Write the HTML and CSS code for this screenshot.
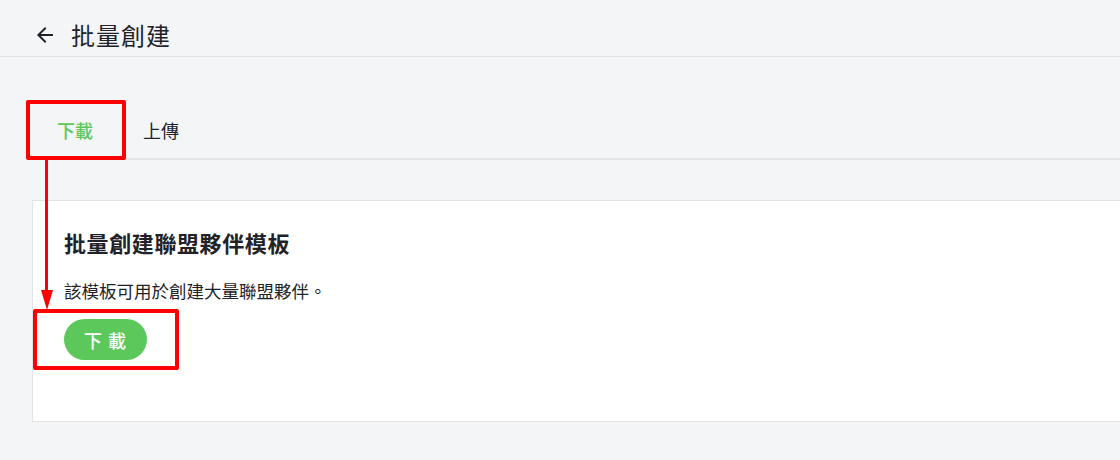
FILE: index.html
```html
<!DOCTYPE html>
<html lang="zh-Hant">
<head>
<meta charset="utf-8">
<title>批量創建</title>
<link rel="stylesheet" href="styles.css">
</head>
<body>
<header class="topbar">
  <svg class="back" viewBox="0 0 24 24" width="24" height="24" aria-hidden="true"><path d="M20 11H7.83l5.59-5.59L12 4l-8 8 8 8 1.41-1.41L7.83 13H20v-2z"/></svg>
  <h1 class="page-title">批量創建</h1>
</header>
<main class="content">
  <nav class="tabs">
    <span class="tab active">下載</span>
    <span class="tab">上傳</span>
  </nav>
  <section class="card">
    <h2 class="card-title">批量創建聯盟夥伴模板</h2>
    <p class="card-desc">該模板可用於創建大量聯盟夥伴。</p>
    <button class="btn">下 載</button>
  </section>
</main>
<div class="mark mark-tab"></div>
<div class="mark mark-btn"></div>
<div class="mark-line"></div>
<div class="mark-head"></div>
</body>
</html>
```
FILE: styles.css
```css
* { box-sizing: border-box; }
html, body { margin: 0; padding: 0; }
body {
  background: #f4f5f7;
  font-family: "Noto Sans CJK TC", "Noto Sans", sans-serif;
  color: #1f2329;
  overflow: hidden;
  height: 460px;
  position: relative;
}
.topbar {
  height: 57px;
  display: flex;
  align-items: center;
  padding: 14px 0 0 33px;
  border-bottom: 1px solid #e2e4e7;
}
.back { fill: #1f2329; flex: none; }
.page-title {
  margin: 0 0 0 14px;
  font-size: 24px;
  font-weight: 400;
  letter-spacing: 1px;
  line-height: 1;
}
.content { padding-left: 32px; }
.tabs {
  margin-top: 44px;
  height: 59px;
  display: flex;
  align-items: center;
  border-bottom: 2px solid #e4e5e7;
}
.tab {
  font-size: 18px;
  line-height: 1;
  padding: 0 25px;
  color: #1f2329;
}
.tab.active { color: #5cc85c; font-weight: 500; }
.card {
  margin-top: 40px;
  height: 222px;
  background: #fff;
  border: 1px solid #e2e3e5;
  border-right: none;
  padding: 28px 31px;
}
.card-title {
  margin: 0;
  font-size: 22px;
  font-weight: 700;
  letter-spacing: 0.6px;
  line-height: 26px;
}
.card-desc {
  margin: 25px 0 0;
  font-size: 17.5px;
  line-height: 22px;
  letter-spacing: 0;
}
.btn {
  margin-top: 17px;
  width: 83px;
  height: 41px;
  border: none;
  border-radius: 21px;
  background: #5cc85c;
  color: #fff;
  font-family: inherit;
  font-size: 18px;
  font-weight: 500;
  letter-spacing: 1px;
  padding: 0;
}
.mark {
  position: absolute;
  border: 4px solid #ff0000;
  border-radius: 2px;
}
.mark-tab { left: 26px; top: 100px; width: 100px; height: 60px; }
.mark-btn { left: 33px; top: 309px; width: 146px; height: 61px; }
.mark-line {
  position: absolute;
  left: 45px;
  top: 158px;
  width: 3px;
  height: 134px;
  background: #ff0000;
}
.mark-head {
  position: absolute;
  left: 40.5px;
  top: 290px;
  width: 0;
  height: 0;
  border-left: 6px solid transparent;
  border-right: 6px solid transparent;
  border-top: 20px solid #ff0000;
}
```
